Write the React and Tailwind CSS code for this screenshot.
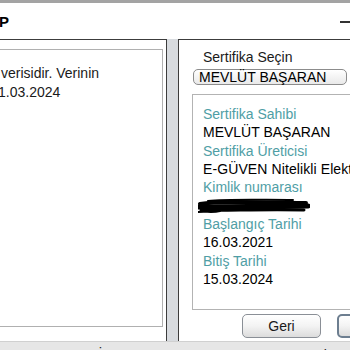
import React from "react";

const teal = "text-[#4f9ea5]";

function Scribble() {
  return (
    <svg width="112" height="16" viewBox="0 0 112 16" className="block">
      <path d="M2 6 C20 3, 50 4, 108 5" stroke="#000" strokeWidth="4" fill="none" strokeLinecap="round" />
      <path d="M1 9 C30 8, 70 9, 110 8" stroke="#000" strokeWidth="5" fill="none" strokeLinecap="round" />
      <path d="M3 12 C25 13, 60 11, 106 12" stroke="#000" strokeWidth="3" fill="none" strokeLinecap="round" />
      <path d="M0 14 C8 13, 14 15, 22 13" stroke="#000" strokeWidth="2" fill="none" strokeLinecap="round" />
      <path d="M10 3 C30 1, 60 2, 95 2" stroke="#000" strokeWidth="2" fill="none" strokeLinecap="round" />
    </svg>
  );
}

export default function App() {
  return (
    <div
      className="w-[350px] h-[350px] overflow-hidden bg-white flex flex-col text-[14px] text-black"
      style={{ fontFamily: '"Liberation Sans", Arial, sans-serif' }}
    >
      <div className="h-[3px] bg-[#a3a3a3] shrink-0" />
      <div className="h-[36px] shrink-0 flex items-center justify-between">
        <span className="font-bold text-[15px] -ml-[1px] leading-none">P</span>
        <div className="w-[10px] h-[2px] bg-[#333] mr-0 mt-[2px]" />
      </div>
      <div className="h-[302px] shrink-0 flex">
        <div className="w-[167px] shrink-0 border-t border-r border-[#3c3c3c] bg-white flex flex-col pt-[9px] pr-[3px] pb-[14px]">
          <div className="flex-1 border-t border-r border-b border-[#b0b0b0] pt-[14px] leading-[19px] whitespace-nowrap overflow-hidden text-[#1a1a1a]">
            <div className="pl-[1px]">verisidir. Verinin</div>
            <div className="-ml-[2px]">1.03.2024</div>
          </div>
        </div>
        <div className="w-[11px] shrink-0 bg-[#d8dbdf]" />
        <div className="flex-1 min-w-0 border-t border-l border-[#3c3c3c] bg-white flex flex-col overflow-hidden">
          <div className="pl-[24px] pt-[7px] leading-[20px] text-[#1a1a1a]">Sertifika Seçin</div>
          <div className="ml-[14px] mt-[2px] w-[154px] shrink-0 h-[16px] rounded-[5px] border border-[#8c8c8c] bg-gradient-to-b from-white to-[#e9e9e9] flex items-center pl-[5px] leading-none whitespace-nowrap">
            MEVLÜT BAŞARAN
          </div>
          <div className="ml-[13px] mt-[9px] w-[300px] shrink-0 h-[216px] border-l border-t border-b border-[#b3b3b3] pl-[10px] pt-[10px] leading-[18.33px] whitespace-nowrap overflow-hidden">
            <div className={teal}>Sertifika Sahibi</div>
            <div>MEVLÜT BAŞARAN</div>
            <div className={teal}>Sertifika Üreticisi</div>
            <div className="tracking-[0.1px]">E-GÜVEN Nitelikli Elektronik Sertifika</div>
            <div className={teal}>Kimlik numarası</div>
            <div className="h-[18.33px] -ml-[5px] flex items-center">
              <Scribble />
            </div>
            <div className={teal}>Başlangıç Tarihi</div>
            <div>16.03.2021</div>
            <div className={teal}>Bitiş Tarihi</div>
            <div>15.03.2024</div>
          </div>
          <div className="flex mt-[4px] pl-[63px] gap-[16px] w-[300px]">
            <button className="w-[79px] shrink-0 h-[24px] rounded-[5px] border border-[#8a8f96] bg-gradient-to-b from-white via-[#f3f3f3] to-[#dcdcdc] flex items-center justify-center text-[14px] text-[#1a1a1a]">
              Geri
            </button>
            <button className="w-[79px] h-[24px] shrink-0 rounded-[5px] border-2 border-[#6d7e90] bg-gradient-to-b from-white via-[#f3f3f3] to-[#dcdcdc]" />
          </div>
        </div>
      </div>
      <div className="flex-1 bg-[#e6e6e6] border-t border-[#d0d0d0] overflow-hidden">
        <div className="flex whitespace-nowrap text-[14px] text-[#222] leading-none pt-[6px]">
          <span className="ml-[66px]">T</span>
          <span className="ml-[24px]">İ</span>
          <span className="ml-[128px]">W</span>
          <span className="ml-[80px]">l</span>
        </div>
      </div>
    </div>
  );
}
